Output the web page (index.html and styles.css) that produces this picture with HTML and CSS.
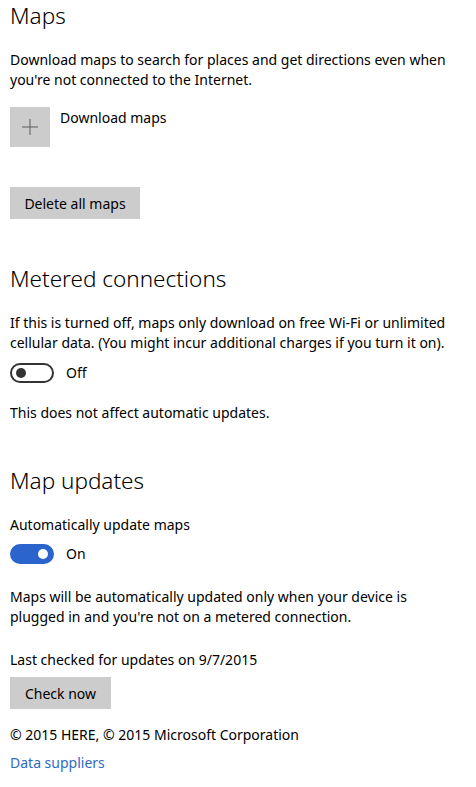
FILE: index.html
```html
<!DOCTYPE html>
<html lang="en">
<head>
    <meta charset="UTF-8">
    <meta name="viewport" content="width=device-width, initial-scale=1.0">
    <title>Maps settings</title>
    <link rel="stylesheet" href="styles.css">
</head>
<body>
    <div id="settings">
        <section class="group group-maps">
            <h2>Maps</h2>
            <p class="text intro">Download maps to search for places and get directions even when you're not connected to the Internet.</p>
            <div class="add-row">
                <div class="add-box">
                    <svg width="16" height="16" viewBox="0 0 16 16"><path d="M8 0v16M0 8h16" stroke="#5c5c5c" stroke-width="1"/></svg>
                </div>
                <span class="add-label">Download maps</span>
            </div>
            <button class="btn btn-delete">Delete all maps</button>
        </section>

        <section class="group group-metered">
            <h2>Metered connections</h2>
            <p class="text intro">If this is turned off, maps only download on free Wi-Fi or unlimited cellular data. (You might incur additional charges if you turn it on).</p>
            <div class="toggle-row">
                <span class="toggle"><span class="knob"></span></span>
                <span class="toggle-label">Off</span>
            </div>
            <p class="text note">This does not affect automatic updates.</p>
        </section>

        <section class="group group-updates">
            <h2>Map updates</h2>
            <p class="text intro">Automatically update maps</p>
            <div class="toggle-row toggle-row-on">
                <span class="toggle on"><span class="knob"></span></span>
                <span class="toggle-label">On</span>
            </div>
            <p class="text note-wide">Maps will be automatically updated only when your device is plugged in and you're not on a metered connection.</p>
            <p class="text checked">Last checked for updates on 9/7/2015</p>
            <button class="btn btn-check">Check now</button>
            <p class="text copyright">&copy; 2015 HERE, &copy; 2015 Microsoft Corporation</p>
            <a class="link" href="#">Data suppliers</a>
        </section>
    </div>
</body>
</html>
```

FILE: styles.css
```css
body {
    margin: 0;
    background-color: #fff;
    color: #000;
    font-family: "Noto Sans", "Open Sans", sans-serif;
    font-size: 14px;
}
#settings {
    width: 444px;
    padding: 1px 0 0 10px;
}
h2 {
    margin: 0;
    font-size: 22.5px;
    font-weight: 300;
    line-height: 30px;
}
.text {
    margin: 0;
    line-height: 20px;
}
.intro {
    margin-top: 19px;
}
.group-metered {
    margin-top: 45px;
}
.group-updates {
    margin-top: 43px;
}

/* download maps */
.add-row {
    display: flex;
    gap: 10px;
    margin-top: 17px;
}
.add-box {
    width: 40px;
    height: 40px;
    background-color: #cccccc;
    display: flex;
    align-items: center;
    justify-content: center;
}
.add-label {
    line-height: 20px;
    margin-top: 1px;
}

/* buttons */
.btn {
    display: block;
    border: none;
    background-color: #cccccc;
    font-family: inherit;
    font-size: 14px;
    color: #000;
    height: 32px;
    padding: 0 14px;
}
.btn-delete {
    margin-top: 40px;
    width: 130px;
}
.btn-check {
    margin-top: 7px;
    width: 101px;
}

/* toggles */
.toggle-row {
    display: flex;
    align-items: center;
    gap: 12px;
    margin-top: 10px;
    line-height: 20px;
}
.toggle-row-on {
    margin-top: 9px;
}
.toggle {
    box-sizing: border-box;
    width: 44px;
    height: 20px;
    border: 2px solid #333;
    border-radius: 10px;
    position: relative;
}
.toggle .knob {
    position: absolute;
    top: 3px;
    left: 4px;
    width: 10px;
    height: 10px;
    border-radius: 50%;
    background-color: #333;
}
.toggle.on {
    background-color: #2a64cc;
    border-color: #2a64cc;
}
.toggle.on .knob {
    left: auto;
    right: 4px;
    background-color: #fff;
}

.note {
    margin-top: 20px;
}
.note-wide {
    margin-top: 23px;
}
.checked {
    margin-top: 23px;
}
.copyright {
    margin-top: 16px;
}
.link {
    display: block;
    margin-top: 8px;
    color: #306bc2;
    text-decoration: none;
    line-height: 20px;
}
```
